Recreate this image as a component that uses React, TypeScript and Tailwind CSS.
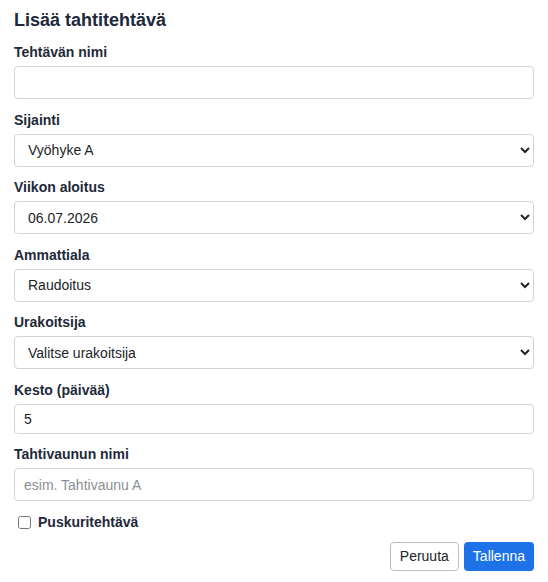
import { useState } from 'react'

const fieldClass =
  'block h-[33px] w-full rounded border border-[#ced4da] bg-white px-[9px] text-[14px] text-[#212529] outline-none'

function Field({ label, children }: { label: string; children: React.ReactNode }) {
  return (
    <div className="mb-[10.5px]">
      <label className="mb-1 block text-[14px] leading-5 font-bold text-gray-800">{label}</label>
      {children}
    </div>
  )
}

export default function App() {
  const [name, setName] = useState('')
  const [duration, setDuration] = useState('5')
  const [wagon, setWagon] = useState('')
  const [buffer, setBuffer] = useState(false)

  return (
    <div className="min-h-[582px] bg-white px-[14px] pt-[6px] font-['Liberation_Sans',Arial,sans-serif]">
      <h2 className="mb-[8px] text-[18px] leading-7 font-bold text-gray-800">Lisää tahtitehtävä</h2>

      <Field label="Tehtävän nimi">
        <input className={fieldClass} value={name} onChange={(e) => setName(e.target.value)} />
      </Field>

      <Field label="Sijainti">
        <select className={fieldClass} defaultValue="a">
          <option value="a">Vyöhyke A</option>
          <option value="b">Vyöhyke B</option>
        </select>
      </Field>

      <Field label="Viikon aloitus">
        <select className={fieldClass} defaultValue="2026-07-06">
          <option value="2026-07-06">06.07.2026</option>
          <option value="2026-07-13">13.07.2026</option>
        </select>
      </Field>

      <Field label="Ammattiala">
        <select className={fieldClass} defaultValue="raudoitus">
          <option value="raudoitus">Raudoitus</option>
          <option value="muotitus">Muotitus</option>
        </select>
      </Field>

      <Field label="Urakoitsija">
        <select className={fieldClass} defaultValue="">
          <option value="">Valitse urakoitsija</option>
        </select>
      </Field>

      <Field label="Kesto (päivää)">
        <input
          type="number"
          className="block h-[30px] w-full rounded border border-[#ced4da] bg-white px-[9px] text-[14px] text-[#212529] outline-none"
          value={duration}
          onChange={(e) => setDuration(e.target.value)}
        />
      </Field>

      <Field label="Tahtivaunun nimi">
        <input
          className={fieldClass + ' placeholder:text-[#8a8f94]'}
          placeholder="esim. Tahtivaunu A"
          value={wagon}
          onChange={(e) => setWagon(e.target.value)}
        />
      </Field>

      <label className="mt-[11px] flex items-center gap-[7px] pl-[4px] text-[14px] font-bold text-gray-800">
        <input
          type="checkbox"
          className="m-0 size-[13px]"
          checked={buffer}
          onChange={(e) => setBuffer(e.target.checked)}
        />
        Puskuritehtävä
      </label>

      <div className="mt-[9px] flex justify-end gap-[5px]">
        <button className="h-[29px] rounded border border-[#b8bfc6] bg-white px-[9px] text-[14px] text-[#212529]">
          Peruuta
        </button>
        <button className="h-[29px] rounded bg-[#1d72e8] px-[9px] text-[14px] text-white">
          Tallenna
        </button>
      </div>
    </div>
  )
}
